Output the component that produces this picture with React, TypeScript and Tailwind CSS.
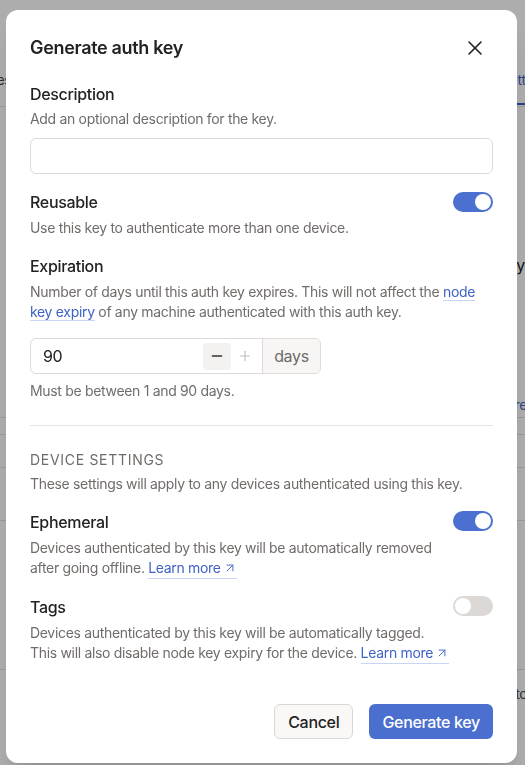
import { X, ArrowUpRight, Minus, Plus } from 'lucide-react';

const Toggle = ({ on }: { on: boolean }) => (
  <button
    className={
      on
        ? 'flex h-5 w-10 shrink-0 items-center justify-end rounded-full bg-[#4b70cf] p-[2px]'
        : 'flex h-5 w-10 shrink-0 items-center justify-start rounded-full bg-[#dcd8d6] p-[2px]'
    }
  >
    <span className="h-4 w-4 rounded-full bg-white" />
  </button>
);

const LearnMore = () => (
  <a href="#" className="inline-flex items-center gap-[2px] border-b border-[#c9d5f5] text-[#3f62c6]">
    Learn more
    <ArrowUpRight size={14} strokeWidth={1.6} />
  </a>
);

const App = () => {
  return (
    <div className="relative min-h-screen overflow-hidden bg-white font-['Inter','Noto_Sans',sans-serif] tracking-[-0.02em] text-[#232222]">
      {/* page behind the dialog */}
      <div className="pt-[68px]">
        <div className="flex h-[39px] items-start justify-between border-b border-[#e5e2e0] text-sm">
          <span className="-ml-[50px] pt-[2px] text-[#444]">Machines</span>
          <span className="-mr-[27px] border-b-2 border-[#3f62c6] pb-[13px] pt-[2px] text-[#3f62c6]">Settings</span>
        </div>
        <div className="flex justify-end pt-[146px] text-base">
          <span>Key expiry</span>
        </div>
        <div className="flex justify-end pt-[118px] text-sm text-[#3f62c6]">
          <span className="-mr-[2px]">Share</span>
        </div>
        <div className="mt-[2px] border-b border-[#e5e2e0]" />
        <div className="mt-[16px] border-b border-[#e5e2e0]" />
        <div className="mt-[32px] border-b border-[#e5e2e0]" />
        <div className="mt-[52px] border-b border-[#e5e2e0]" />
        <div className="mt-[148px] border-b border-[#e5e2e0]" />
        <div className="flex justify-end pt-[14px] text-sm text-[#444]">
          <span className="-mr-[2px]">Etc</span>
        </div>
      </div>

      {/* overlay + dialog */}
      <div className="fixed inset-0 flex items-start bg-black/[0.32]">
        <div className="ml-[6px] mt-[10px] w-[511px] rounded-xl bg-white px-6 pb-6 pt-6 shadow-xl">
          <div className="flex items-center justify-between">
            <h2 className="text-lg font-semibold leading-7">Generate auth key</h2>
            <button className="mr-[6px] text-[#232222]">
              <X size={24} strokeWidth={1.6} />
            </button>
          </div>

          <div className="mt-5 text-base font-medium leading-6">Description</div>
          <p className="mt-[3px] text-sm leading-5 text-[#706c6a]">Add an optional description for the key.</p>
          <input className="mt-[9px] h-9 w-full rounded-md border border-[#dedad8] px-3 text-base outline-none" />

          <div className="mt-4 flex items-start justify-between">
            <div className="text-base font-medium leading-6">Reusable</div>
            <div className="pt-[2px]">
              <Toggle on />
            </div>
          </div>
          <p className="mt-1 text-sm leading-5 text-[#706c6a]">Use this key to authenticate more than one device.</p>

          <div className="mt-4 text-base font-medium leading-6">Expiration</div>
          <p className="mt-1 text-sm leading-5 text-[#706c6a]">
            Number of days until this auth key expires. This will not affect the{' '}
            <a href="#" className="border-b border-[#c9d5f5] text-[#3f62c6]">
              node key expiry
            </a>{' '}
            of any machine authenticated with this auth key.
          </p>

          <div className="mt-4 flex h-9 w-[291px] overflow-hidden rounded-md border border-[#dedad8]">
            <div className="flex flex-1 items-center pl-3 pr-[3px]">
              <span className="flex-1 text-base">90</span>
              <button className="flex h-[27px] w-7 items-center justify-center rounded bg-[#f3f2f1] text-[#333]">
                <Minus size={16} strokeWidth={2} />
              </button>
              <button className="flex h-[27px] w-7 items-center justify-center text-[#c4c0be]">
                <Plus size={16} strokeWidth={1.75} />
              </button>
            </div>
            <div className="flex w-[58px] items-center justify-center border-l border-[#dedad8] bg-[#f7f6f5] text-base text-[#6f6b69]">
              days
            </div>
          </div>
          <p className="mt-[7px] text-sm leading-5 text-[#706c6a]">Must be between 1 and 90 days.</p>

          <div className="mt-6 border-t border-[#e7e4e2]" />

          <div className="mt-6 text-sm uppercase leading-5 tracking-wider text-[#6f6b69]">Device settings</div>
          <p className="mt-1 text-sm leading-5 text-[#706c6a]">
            These settings will apply to any devices authenticated using this key.
          </p>

          <div className="mt-4 flex items-start justify-between">
            <div className="text-base font-medium leading-6">Ephemeral</div>
            <div className="pt-[1px]">
              <Toggle on />
            </div>
          </div>
          <p className="mt-1 pr-12 text-sm leading-5 text-[#706c6a]">
            Devices authenticated by this key will be automatically removed after going offline. <LearnMore />
          </p>

          <div className="mt-4 flex items-start justify-between">
            <div className="text-base font-medium leading-6">Tags</div>
            <div className="pt-[1px]">
              <Toggle on={false} />
            </div>
          </div>
          <p className="mt-1 text-sm leading-5 text-[#706c6a]">
            Devices authenticated by this key will be automatically tagged.
            <br />
            This will also disable node key expiry for the device. <LearnMore />
          </p>

          <div className="mt-10 flex justify-end gap-4">
            <button className="h-[35px] rounded-md border border-[#dad6d4] bg-[#f9f8f7] px-[13px] text-base font-medium text-[#232222]">
              Cancel
            </button>
            <button className="h-[35px] rounded-md bg-[#4a6fcf] px-[13px] text-base font-medium text-white">
              Generate key
            </button>
          </div>
        </div>
      </div>
    </div>
  );
};

export default App;
